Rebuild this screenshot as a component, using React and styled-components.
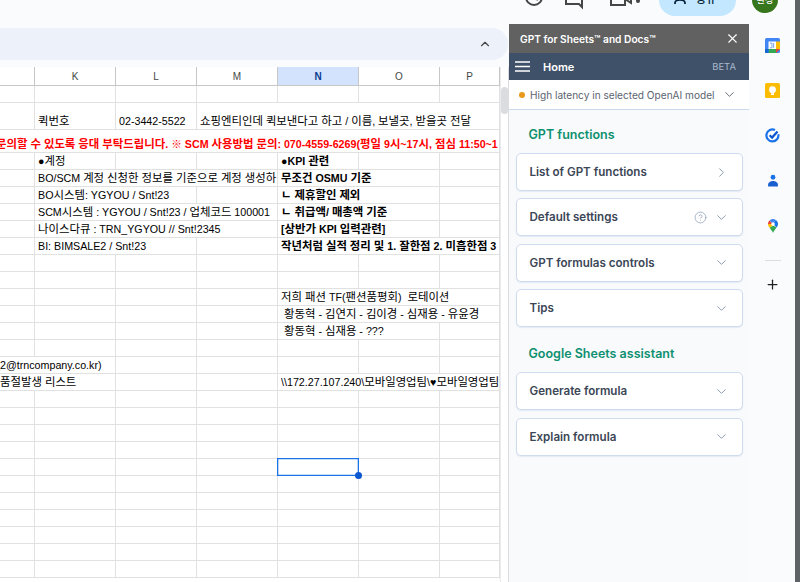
import React from 'react';
import styled, { createGlobalStyle } from 'styled-components';
import { ChevronDown, ChevronRight, ChevronUp, CircleHelp, Plus, X } from 'lucide-react';

const GlobalStyle = createGlobalStyle`
  html,
  body {
    margin: 0;
    padding: 0;
    background: #f9fbfd;
  }
`;

const Page = styled.div`
  display: flex;
  width: 800px;
  height: 582px;
  overflow: hidden;
`;
const Content = styled.div`
  display: flex;
  flex-direction: column;
  width: 795px;
  background: #f9fbfd;
`;
const WindowBar = styled.div`
  flex: 1;
  background: #5f6368;
`;

const TopBar = styled.div`
  display: flex;
  flex: 0 0 24px;
  align-items: flex-start;
  height: 24px;
  overflow: hidden;
  padding-left: 524px;
`;
const TopIcon = styled.svg`
  flex: none;
  margin-top: ${p => p.$top}px;
  margin-right: ${p => p.$gap}px;
  fill: none;
  stroke: #444746;
  stroke-width: 2;
`;
const SharePill = styled.div`
  display: flex;
  flex: none;
  align-items: flex-end;
  gap: 9px;
  width: 77px;
  height: 32px;
  margin-top: -16px;
  margin-right: 16px;
  padding: 0 0 11px 15px;
  box-sizing: border-box;
  border-radius: 16px;
  background: #c2e7ff;
  color: #001d35;
  font: 500 11px 'Noto Sans CJK KR', sans-serif;
  line-height: 13px;
`;
const Avatar = styled.div`
  display: flex;
  flex: none;
  align-items: flex-end;
  justify-content: center;
  width: 26px;
  height: 26px;
  margin-top: -13px;
  padding-bottom: 8px;
  box-sizing: border-box;
  border-radius: 50%;
  background: #38761d;
  color: #fff;
  font: 500 9px 'Noto Sans CJK KR', sans-serif;
  line-height: 10px;
`;

const Workspace = styled.div`
  display: flex;
  flex: 1;
  min-height: 0;
`;
const Sheet = styled.div`
  display: flex;
  flex: 0 0 509px;
  flex-direction: column;
  padding-top: 4px;
  box-sizing: border-box;
`;
const FormulaBand = styled.div`
  display: flex;
  flex: 0 0 32px;
  align-items: center;
  justify-content: flex-end;
  margin-right: 1px;
  margin-bottom: 7px;
  padding-right: 16px;
  border-radius: 0 16px 16px 0;
  background: #edf2fa;
  color: #444746;
`;
const SheetBody = styled.div`
  display: flex;
  flex: 1;
  background: #fff;
  border-right: 1px solid #dadce0;
  overflow: hidden;
`;
const GridArea = styled.div`
  display: grid;
  flex: 0 0 499px;
  grid-template-columns: 35px repeat(5, 81px) 60px;
  grid-auto-rows: auto;
  align-content: start;
  font: 10.7px 'Liberation Sans', 'Noto Sans CJK KR', sans-serif;
  color: #000;
`;
const Gutter = styled.div`
  flex: 1;
  padding-top: 20px;
  border-left: 1px solid #e8eaed;
`;
const Thumb = styled.div`
  width: 7px;
  height: 27px;
  border-radius: 4px;
  background: #dadce0;
`;
const ColHead = styled.div`
  display: flex;
  height: 19px;
  align-items: center;
  justify-content: center;
  box-sizing: border-box;
  border-right: 1px solid #c7c7c7;
  border-bottom: 1px solid #c7c7c7;
  background: ${p => (p.$active ? '#d3e3fd' : '#fff')};
  color: ${p => (p.$active ? '#0b3d91' : '#444746')};
  font: ${p => (p.$active ? 700 : 400)} 10px 'Liberation Sans', sans-serif;
`;
const Cell = styled.div`
  position: relative;
  display: flex;
  align-items: flex-end;
  grid-column: span ${p => p.$span || 1};
  height: ${p => p.$height || 17}px;
  min-width: 0;
  padding: 0 0 1px ${p => p.$pad ?? 3}px;
  box-sizing: border-box;
  border-right: 1px solid #e1e1e1;
  border-bottom: 1px solid #e1e1e1;
  white-space: pre;
  text-indent: ${p => p.$indent || 0}px;
  font-weight: ${p => (p.$bold ? 700 : 400)};
  color: ${p => (p.$red ? '#ff0000' : '#000')};
  line-height: 14px;
`;
const CellText = styled.span`
  display: block;
  width: 100%;
  overflow: hidden;
`;
const Hangul = styled.span`
  font-family: 'Noto Sans CJK KR', sans-serif;
  font-size: 11.4px;
`;
const Selection = styled.div`
  position: absolute;
  z-index: 2;
  top: -1px;
  right: -1px;
  bottom: -1px;
  left: -1px;
  border: 1px solid #1a73e8;
  box-shadow: inset 0 0 0 0.3px #1a73e8;
`;
const FillHandle = styled.div`
  position: absolute;
  right: -4px;
  bottom: -4px;
  width: 7px;
  height: 7px;
  border-radius: 50%;
  background: #0b57d0;
`;

const SidePanel = styled.div`
  display: flex;
  flex: 0 0 240px;
  flex-direction: column;
  background: #f8fafc;
  font-family: Inter, 'Noto Sans', sans-serif;
`;
const PanelTitle = styled.div`
  display: flex;
  flex: 0 0 29px;
  align-items: center;
  justify-content: space-between;
  padding: 0 9px 0 11px;
  background: #616161;
  color: #fff;
  font-size: 10.2px;
  font-weight: 600;
`;
const PanelNav = styled.div`
  display: flex;
  flex: 0 0 27px;
  align-items: center;
  padding: 0 13px 0 6px;
  background: #3f5168;
  color: #fff;
`;
const MenuBars = styled.svg`
  flex: none;
  stroke: #fff;
  stroke-width: 1.4;
`;
const NavHome = styled.span`
  flex: 1;
  margin-left: 13px;
  font-size: 11px;
  font-weight: 600;
`;
const NavBeta = styled.span`
  color: #a9b8cc;
  font-size: 9.5px;
`;
const Notice = styled.div`
  display: flex;
  flex: 0 0 30px;
  align-items: center;
  padding: 0 12px 0 10px;
  box-sizing: border-box;
  border-bottom: 1px solid #cbd9ee;
  background: #fff;
  color: #5b6470;
  font-size: 10.1px;
`;
const NoticeDot = styled.span`
  flex: none;
  width: 6px;
  height: 6px;
  margin-right: 5px;
  border-radius: 50%;
  background: #e8991c;
`;
const NoticeText = styled.span`
  flex: 1;
`;
const PanelBody = styled.div`
  display: flex;
  flex-direction: column;
  padding: 15px 6px 0 6.5px;
`;
const SectionTitle = styled.h3`
  height: 20px;
  margin: ${p => (p.$first ? '0 0 8px 13px' : '16.5px 0 8.5px 13px')};
  color: #0e9070;
  font-size: 12.5px;
  font-weight: 600;
  line-height: 20px;
`;
const CardStack = styled.div`
  display: flex;
  flex-direction: column;
  gap: 7.4px;
`;
const Card = styled.div`
  display: flex;
  align-items: center;
  gap: 7px;
  height: 38px;
  padding: 0 13px;
  box-sizing: border-box;
  border: 1px solid #cfdcf0;
  border-radius: 5px;
  background: #fff;
  box-shadow: 0 1px 1px rgba(90, 120, 170, 0.12);
  color: #3b4656;
  font-size: 11.6px;
  font-weight: 600;
`;
const CardLabel = styled.span`
  flex: 1;
`;

const Rail = styled.div`
  display: flex;
  flex: 1;
  flex-direction: column;
  align-items: center;
  gap: 2px;
  padding-left: 1px;
`;
const RailSlot = styled.div`
  display: flex;
  flex: 0 0 43px;
  align-items: center;
  justify-content: center;
`;
const RailRule = styled.div`
  width: 16px;
  height: 1px;
  margin: 11px 0 14px;
  background: #dadce0;
`;
const RailPlus = styled.div`
  display: flex;
  color: #1f1f1f;
`;

const columns = ['K', 'L', 'M', 'N', 'O', 'P'];

// [span, text, options] per row, blank cells are filled in by makeRow
const sheetRows = [
  { cells: [] },
  {
    height: 27,
    cells: [
      [1, ''],
      [1, '퀵번호'],
      [1, '02-3442-5522'],
      [4, '쇼핑엔티인데 퀵보낸다고 하고 / 이름, 보낼곳, 받을곳 전달'],
    ],
  },
  {
    height: 23,
    cells: [
      [
        7,
        '문의할 수 있도록 응대 부탁드립니다. ※ SCM 사용방법 문의: 070-4559-6269(평일 9시~17시, 점심 11:50~1',
        { red: true, bold: true, pad: 0, indent: -4 },
      ],
    ],
  },
  {
    cells: [
      [1, ''],
      [1, '●계정'],
      [1, ''],
      [1, ''],
      [1, '●KPI 관련', { bold: true }],
    ],
  },
  {
    cells: [
      [1, ''],
      [3, 'BO/SCM 계정 신청한 정보를 기준으로 계정 생성하'],
      [2, '무조건 OSMU 기준', { bold: true }],
    ],
  },
  {
    cells: [
      [1, ''],
      [2, 'BO시스템: YGYOU / Snt!23'],
      [1, ''],
      [2, 'ㄴ 제휴할인 제외', { bold: true }],
    ],
  },
  {
    cells: [
      [1, ''],
      [3, 'SCM시스템 : YGYOU / Snt!23 / 업체코드 100001'],
      [2, 'ㄴ 취급액/ 매총액 기준', { bold: true }],
    ],
  },
  {
    cells: [
      [1, ''],
      [3, '나이스다큐 : TRN_YGYOU // Snt!2345'],
      [2, '[상반가 KPI 입력관련]', { bold: true }],
    ],
  },
  {
    cells: [
      [1, ''],
      [2, 'BI: BIMSALE2 / Snt!23'],
      [1, ''],
      [3, '작년처럼 실적 정리 및 1. 잘한점 2. 미흡한점 3', { bold: true }],
    ],
  },
  { cells: [] },
  { cells: [] },
  { cells: [[1, ''], [1, ''], [1, ''], [1, ''], [3, '저희 패션 TF(팬션품평회)  로테이션']] },
  { cells: [[1, ''], [1, ''], [1, ''], [1, ''], [3, ' 황동혁 - 김연지 - 김이경 - 심재용 - 유윤경']] },
  { cells: [[1, ''], [1, ''], [1, ''], [1, ''], [2, ' 황동혁 - 심재용 - ???']] },
  { cells: [] },
  { cells: [[2, '2@trncompany.co.kr)', { pad: 0 }]] },
  {
    cells: [
      [2, '품절발생 리스트', { pad: 0 }],
      [1, ''],
      [1, ''],
      [3, '\\\\172.27.107.240\\모바일영업팀\\♥모바일영업팀'],
    ],
  },
  { cells: [] },
  { cells: [] },
  { cells: [] },
  { cells: [] },
  { cells: [], selected: true },
  { cells: [] },
  { cells: [] },
  { cells: [] },
  { cells: [] },
  { cells: [] },
  { cells: [] },
];

const withHangul = text =>
  text.split(/([\uAC00-\uD7A3\u3131-\u318E]+)/).map((part, i) =>
    i % 2 ? <Hangul key={i}>{part}</Hangul> : part,
  );

const makeRow = (row, index) => {
  const used = row.cells.reduce((sum, c) => sum + c[0], 0);
  const cells = [...row.cells];
  for (let i = used; i < 7; i++) cells.push([1, '']);
  return cells.map(([span, text, opts = {}], i) => (
    <Cell
      key={`${index}-${i}`}
      $span={span}
      $height={row.height}
      $bold={opts.bold}
      $red={opts.red}
      $pad={opts.pad}
      $indent={opts.indent}
    >
      <CellText>{withHangul(text)}</CellText>
      {row.selected && i === 4 && (
        <Selection>
          <FillHandle />
        </Selection>
      )}
    </Cell>
  ));
};

const CalendarIcon = () => (
  <svg width="15" height="15" viewBox="0 0 15 15">
    <rect x="0" y="0" width="15" height="15" rx="1.5" fill="#4285f4" />
    <rect x="11" y="3.5" width="4" height="8" fill="#fbbc04" />
    <rect x="3.5" y="11" width="8" height="4" fill="#34a853" />
    <rect x="0" y="11" width="3.5" height="4" fill="#1967d2" />
    <path d="M11 11h4l-4 4z" fill="#ea4335" />
    <rect x="3.5" y="3.5" width="7.5" height="7.5" fill="#fff" />
    <path d="M5 5.2h2v4.6H5M8.6 5.2v4.6" fill="none" stroke="#7fa6e8" strokeWidth="1" />
  </svg>
);
const KeepIcon = () => (
  <svg width="15" height="15" viewBox="0 0 15 15">
    <rect width="15" height="15" rx="1.5" fill="#fbbc04" />
    <circle cx="7.5" cy="6.7" r="3.4" fill="#fff" />
    <rect x="6" y="10.2" width="3" height="1.8" fill="#fff" />
  </svg>
);
const TasksIcon = () => (
  <svg width="15" height="15" viewBox="0 0 15 15" fill="none">
    <path d="M13.3 6.2A6 6 0 1 1 10 2" stroke="#1a73e8" strokeWidth="2.2" />
    <path d="M4.6 7.2l2.5 2.4 5.4-6" stroke="#0b57d0" strokeWidth="2.2" />
  </svg>
);
const ContactsIcon = () => (
  <svg width="12" height="13" viewBox="0 0 14 14">
    <circle cx="7" cy="3.2" r="2.8" fill="#1a73e8" />
    <path d="M1.3 14v-2.2C1.3 9.2 4.4 7.6 7 7.600s5.700 1.600 5.700 4.200V14z" fill="#1a5fd0" />
  </svg>
);
const MapsIcon = () => (
  <svg width="10" height="14" viewBox="0 0 10 14">
    <path d="M5 14C4.400 11.800 2.600 10.400 1.600 8.700L5 6.500l3.600 2C7.500 10.400 5.600 11.800 5 14z" fill="#34a853" />
    <path d="M1.600 8.700C.7 7.600 0 6.400 0 5l3-.7L5 6.500z" fill="#fbbc04" />
    <path d="M0 5C0 3.600.6 2.400 1.500 1.500L5 5z" fill="#ea4335" />
    <path d="M1.500 1.500C2.400.6 3.600 0 5 0c1 0 2 .3 2.800 1L5 5z" fill="#4285f4" />
    <path d="M7.800 1C9.200 2 10 3.400 10 5c0 1.300-.6 2.500-1.400 3.500L5 5z" fill="#1a73e8" />
    <circle cx="5" cy="5" r="1.800" fill="#fff" />
  </svg>
);

const panelCards = {
  functions: ['List of GPT functions', 'Default settings', 'GPT formulas controls', 'Tips'],
  assistant: ['Generate formula', 'Explain formula'],
};

const PanelCard = ({ label }) => (
  <Card>
    <CardLabel>{label}</CardLabel>
    {label === 'Default settings' && <CircleHelp size={13} color="#8ea0b8" strokeWidth={1.4} />}
    {label === 'List of GPT functions' ? (
      <ChevronRight size={15} color="#8595ab" strokeWidth={1.5} />
    ) : (
      <ChevronDown size={15} color="#8595ab" strokeWidth={1.5} />
    )}
  </Card>
);

const App = () => (
  <Page>
    <GlobalStyle />
    <Content>
      <TopBar>
        <TopIcon $top={-13} $gap={21} width="20" height="20" viewBox="0 0 20 20">
          <circle cx="10" cy="10" r="8" />
          <path d="M10 5v5.500l4 2.500" />
        </TopIcon>
        <TopIcon $top={-10} $gap={27} width="18" height="20" viewBox="0 0 18 20">
          <path d="M1 2h16v15l-3-3H1z" />
        </TopIcon>
        <TopIcon $top={-11} $gap={19} width="30" height="18" viewBox="0 0 30 18">
          <path d="M1 2h14v14H1zM15 8l6-4v10l-6-4" />
          <circle cx="28" cy="12" r="1" />
        </TopIcon>
        <SharePill>
          <svg width="13" height="14" viewBox="0 0 13 14" fill="none" stroke="#001d35" strokeWidth="1.700">
            <circle cx="6" cy="4" r="3" />
            <path d="M1 13v-1c0-2 2-3 5-3s5 1 5 3v1" />
          </svg>
          <span>공유</span>
        </SharePill>
        <Avatar>환성</Avatar>
      </TopBar>
      <Workspace>
        <Sheet>
          <FormulaBand>
            <ChevronUp size={14} strokeWidth={2} />
          </FormulaBand>
          <SheetBody>
            <GridArea>
              <ColHead />
              {columns.map(col => (
                <ColHead key={col} $active={col === 'N'}>
                  {col}
                </ColHead>
              ))}
              {sheetRows.flatMap(makeRow)}
            </GridArea>
            <Gutter>
              <Thumb />
            </Gutter>
          </SheetBody>
        </Sheet>
        <SidePanel>
          <PanelTitle>
            <span>GPT for Sheets™ and Docs™</span>
            <X size={15} strokeWidth={1.7} />
          </PanelTitle>
          <PanelNav>
            <MenuBars width="15" height="11" viewBox="0 0 15 11">
              <path d="M0 1h15M0 5.500h15M0 10h15" />
            </MenuBars>
            <NavHome>Home</NavHome>
            <NavBeta>BETA</NavBeta>
          </PanelNav>
          <Notice>
            <NoticeDot />
            <NoticeText>High latency in selected OpenAI model</NoticeText>
            <ChevronDown size={15} color="#5b6470" strokeWidth={1.5} />
          </Notice>
          <PanelBody>
            <SectionTitle $first>GPT functions</SectionTitle>
            <CardStack>
              {panelCards.functions.map(label => (
                <PanelCard key={label} label={label} />
              ))}
            </CardStack>
            <SectionTitle>Google Sheets assistant</SectionTitle>
            <CardStack>
              {panelCards.assistant.map(label => (
                <PanelCard key={label} label={label} />
              ))}
            </CardStack>
          </PanelBody>
        </SidePanel>
        <Rail>
          <RailSlot>
            <CalendarIcon />
          </RailSlot>
          <RailSlot>
            <KeepIcon />
          </RailSlot>
          <RailSlot>
            <TasksIcon />
          </RailSlot>
          <RailSlot>
            <ContactsIcon />
          </RailSlot>
          <RailSlot>
            <MapsIcon />
          </RailSlot>
          <RailRule />
          <RailPlus>
            <Plus size={15} strokeWidth={2} />
          </RailPlus>
        </Rail>
      </Workspace>
    </Content>
    <WindowBar />
  </Page>
);

export default App;
